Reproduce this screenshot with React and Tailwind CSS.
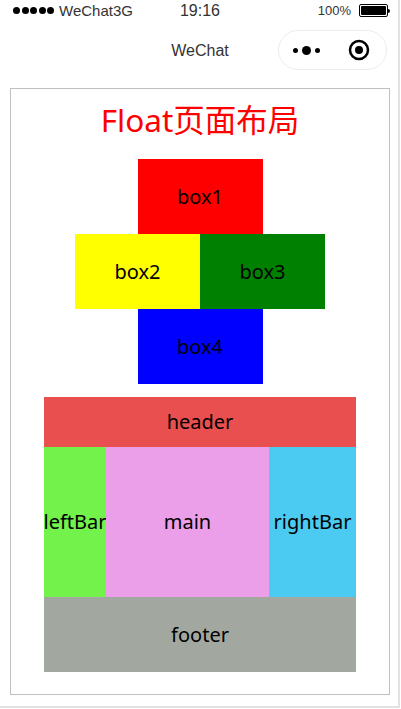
const cellFont = "font-['Noto_Sans','Noto_Sans_CJK_SC',sans-serif] text-[20px] leading-none text-black";

function Cell({ className, children }) {
  return (
    <div className={`flex items-center justify-center whitespace-nowrap ${cellFont} ${className}`}>
      {children}
    </div>
  );
}

function StatusBar() {
  return (
    <div className="flex h-[21px] items-center justify-between pl-[13px] pr-[8px] font-['Liberation_Sans',sans-serif] text-[#333]">
      <div className="flex w-[130px] items-center gap-[5px]">
        <div className="flex gap-[1.5px]">
          {[0, 1, 2, 3, 4].map((dot) => (
            <span key={dot} className="h-[7px] w-[7px] rounded-full bg-black" />
          ))}
        </div>
        <span className="text-[15px] leading-none">WeChat3G</span>
      </div>
      <span className="ml-[-3px] text-[16px] leading-none">19:16</span>
      <div className="flex w-[130px] items-center justify-end gap-[8px]">
        <span className="text-[13px] leading-none">100%</span>
        <div className="flex items-center">
          <div className="h-[13px] w-[29px] rounded-[2px] border border-black p-[1px]">
            <div className="h-full w-full rounded-[1px] bg-black" />
          </div>
          <div className="h-[4px] w-[2px] rounded-r-sm bg-black" />
        </div>
      </div>
    </div>
  );
}

function NavBar() {
  return (
    <div className="relative h-[46px] pt-[9px]">
      <div className="absolute left-0 right-0 top-[21px] text-center font-['Liberation_Sans',sans-serif] text-[16px] leading-[18px] text-[#333]">
        <span className="ml-[2px]">WeChat</span>
      </div>
      <div className="absolute left-[278px] top-[9px] flex h-[40px] w-[109px] items-center rounded-full border border-[#ececec] pl-[14px]">
        <div className="flex items-center gap-[4px]">
          <span className="h-[5px] w-[5px] rounded-full bg-black" />
          <span className="h-[9px] w-[9px] rounded-full bg-black" />
          <span className="h-[5px] w-[5px] rounded-full bg-black" />
        </div>
        <svg className="ml-[28px]" width="22" height="22" viewBox="0 0 22 22">
          <circle cx="11" cy="11" r="9" fill="none" stroke="#000" strokeWidth="2.5" />
          <circle cx="11" cy="11" r="4" fill="#000" />
        </svg>
      </div>
    </div>
  );
}

export default function App() {
  return (
    <div className="h-[709px] w-[401px] bg-white">
      <div className="h-[708px] w-[400px] border-r-2 border-b-2 border-[#e2e2e2]">
        <StatusBar />
        <NavBar />
        <div className="mx-[10px] mt-[21px] h-[607px] w-[380px] border border-[#c0c0c0]">
          <h1 className="pt-[9px] text-center font-['Noto_Sans','Noto_Sans_CJK_SC',sans-serif] text-[31.5px] leading-[44px] text-[#ff0000]">
            Float页面布局
          </h1>
          <div className="mt-[17px] flex flex-col items-center">
            <Cell className="h-[75px] w-[125px] bg-[#ff0000]">box1</Cell>
            <div className="flex">
              <Cell className="h-[75px] w-[125px] bg-[#ffff00]">box2</Cell>
              <Cell className="h-[75px] w-[125px] bg-[#008000]">box3</Cell>
            </div>
            <Cell className="h-[75px] w-[125px] bg-[#0000ff]">box4</Cell>
          </div>
          <div className="ml-[33px] mt-[13px] w-[312px]">
            <Cell className="h-[50px] bg-[#e94f4f]">header</Cell>
            <div className="flex h-[150px]">
              <Cell className="w-[62px] bg-[#72f24b]">leftBar</Cell>
              <Cell className="w-[163px] bg-[#eb9fe8]">main</Cell>
              <Cell className="w-[87px] bg-[#4bcbf2]">rightBar</Cell>
            </div>
            <Cell className="h-[75px] bg-[#a2a89f]">footer</Cell>
          </div>
        </div>
      </div>
    </div>
  );
}
